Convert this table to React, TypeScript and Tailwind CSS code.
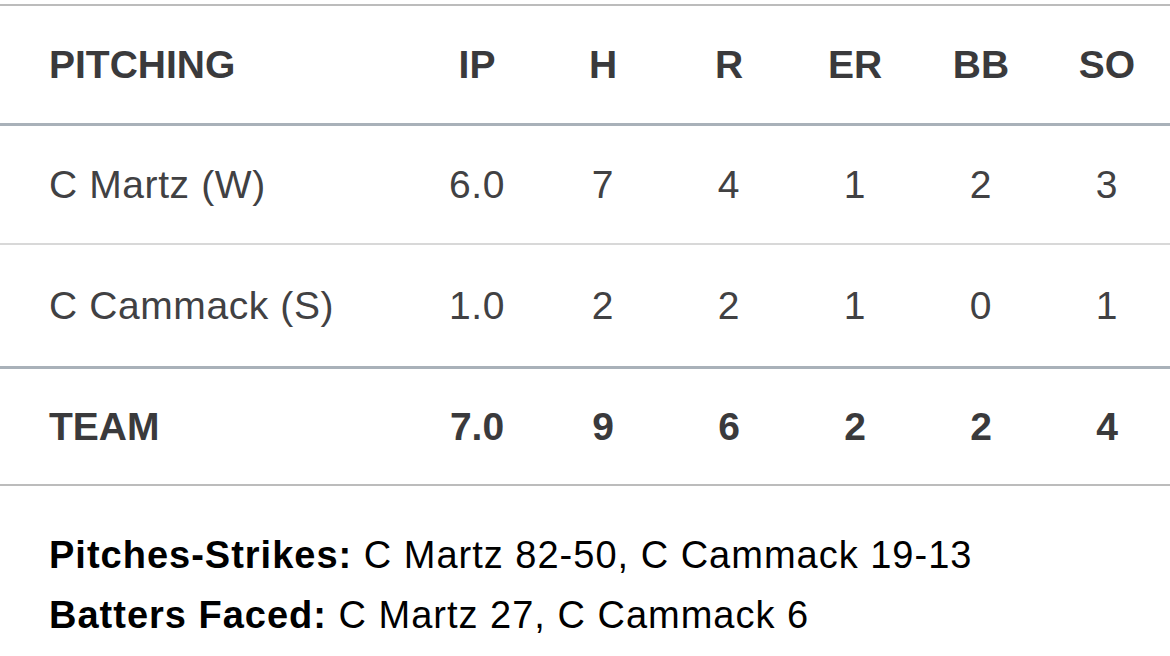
import React from 'react'

const cols = ['IP', 'H', 'R', 'ER', 'BB', 'SO']

const pitchers = [
    { name: 'C Martz (W)', stats: ['6.0', '7', '4', '1', '2', '3'] },
    { name: 'C Cammack (S)', stats: ['1.0', '2', '2', '1', '0', '1'] },
]

const team = ['7.0', '9', '6', '2', '2', '4']

const Row = ({ label, values, bold, className }: { label: string; values: string[]; bold?: boolean; className: string }) => (
    <div className={`flex items-center ${className} ${bold ? 'font-semibold text-[#3a3a3c]' : 'font-normal tracking-[0.6px] text-[#414143]'}`}>
        <div className="w-[414px] pl-[49px] shrink-0">{label}</div>
        {values.map((v, i) => (
            <div key={i} className="w-[126px] shrink-0 text-center">
                {v}
            </div>
        ))}
    </div>
)

const App = () => (
    <div className="w-[1170px] h-[656px] bg-white overflow-hidden font-['Liberation_Sans',Arial,sans-serif] text-[39px] leading-none">
        <div className="h-[4px]" />
        <div className="border-t-2 border-[#bcbcbc]" />
        <Row label="PITCHING" values={cols} bold className="h-[117px]" />
        <div className="border-t-[3px] border-[#a9b1b9]" />
        <Row label="C Martz (W)" values={pitchers[0].stats} className="h-[117px]" />
        <div className="border-t-2 border-[#d8d8d8]" />
        <Row label="C Cammack (S)" values={pitchers[1].stats} className="h-[121px]" />
        <div className="border-t-[3px] border-[#a9b1b9]" />
        <Row label="TEAM" values={team} bold className="h-[115px]" />
        <div className="border-t-2 border-[#bcbcbc]" />
        <div className="pl-[49px] pt-[39px] text-[38px] tracking-[1px] text-black leading-[60px]">
            <div>
                <span className="font-semibold">Pitches-Strikes:</span> C Martz 82-50, C Cammack 19-13
            </div>
            <div>
                <span className="font-semibold">Batters Faced:</span> C Martz 27, C Cammack 6
            </div>
        </div>
    </div>
)

export default App
